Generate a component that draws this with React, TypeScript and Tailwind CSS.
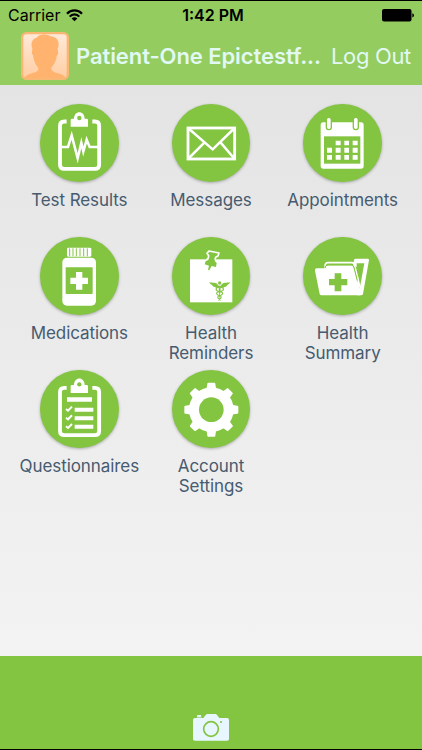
import type { ReactNode } from 'react';

const GREEN = '#83c441';

interface MenuItem {
  lines: string[];
  viewBox: string;
  icon: ReactNode;
}

/** Clipboard outline shared by the results and questionnaire icons */
function Clipboard() {
  return (
    <>
      <path
        d="M110 77.5H103Q90 77.5 90 90V207Q90 219.5 103 219.5H195Q207.5 219.5 207.5 207V90Q207.5 77.5 195 77.5H187"
        fill="none"
        stroke="#fff"
        strokeWidth="11.5"
      />
      <path
        d="M122 93V73Q122 69 126 69H132C132 43 164 43 164 69H170Q174 69 174 73V93Z"
        fill="#fff"
      />
      <circle cx="148" cy="67" r="6.5" fill={GREEN} />
    </>
  );
}

const items: MenuItem[] = [
  {
    lines: ['Test Results'],
    viewBox: '30 25 236 236',
    icon: (
      <>
        <Clipboard />
        <path
          d="M93 154H114L125 119L143 188L154 141L160 168L170 132L179 154H205"
          fill="none"
          stroke="#fff"
          strokeWidth="7.5"
          strokeMiterlimit="8"
        />
      </>
    ),
  },
  {
    lines: ['Messages'],
    viewBox: '35 25 236 236',
    icon: (
      <g fill="none" stroke="#fff" strokeWidth="8.5">
        <rect x="83" y="97" width="140" height="93" />
        <path d="M83 97L157 161L223 97M83 190L132 141M223 190L181 141" strokeWidth="7.5" />
      </g>
    ),
  },
  {
    lines: ['Appointments'],
    viewBox: '70 25 236 236',
    icon: (
      <>
        <rect x="123" y="80" width="129" height="139" rx="8" fill="#fff" />
        <rect x="133" y="122" width="109" height="82" fill={GREEN} />
        <g fill="#fff" stroke={GREEN} strokeWidth="4">
          <rect x="140" y="65" width="15" height="37" rx="7" />
          <rect x="221" y="65" width="15" height="37" rx="7" />
        </g>
        <path
          d="M168 135h15v14h-15zM194 135h14v14h-14zM219 135h15v14h-15zM142 156h15v15h-15zM168 156h15v15h-15zM194 156h14v15h-14zM219 156h15v15h-15zM142 178h15v14h-15zM168 178h15v14h-15zM194 178h14v14h-14zM219 178h15v14h-15z"
          fill="#fff"
        />
      </>
    ),
  },
  {
    lines: ['Medications'],
    viewBox: '60 19 236 236',
    icon: (
      <>
        <rect x="141" y="51" width="73" height="27" rx="4" fill="#fff" />
        <path
          d="M149 53V77M159 53V77M169 53V77M180 53V77M191 53V77M202 53V77"
          stroke={GREEN}
          strokeWidth="3"
        />
        <rect x="127" y="81" width="101" height="144" rx="14" fill="#fff" />
        <rect x="137" y="110" width="81" height="80" rx="2" fill={GREEN} />
        <path d="M168 124h19v17h17v19h-17v17h-19v-17h-17v-19h17z" fill="#fff" />
      </>
    ),
  },
  {
    lines: ['Health', 'Reminders'],
    viewBox: '35 19 236 236',
    icon: (
      <>
        <rect x="89" y="86" width="127" height="129" fill="#fff" />
        <path
          d="M146 63L176 68L172 75L167 80L163 91L169 97L167 109L154 106L147 119L143 118L146 105L133 101L136 92L145 87L147 76L143 70Z"
          fill={GREEN}
        />
        <path
          d="M139 87L144 82L145 75L140 68L146 61L176 67L173 76L166 80L164 87"
          fill="none"
          stroke="#fff"
          strokeWidth="5"
          strokeLinejoin="round"
        />
        <g fill={GREEN}>
          <circle cx="178" cy="157" r="5" />
          <path d="M175 165C168 153 157 158 146 154Q150 161 155 163Q157 169 164 169Q168 173 175 171L178 209L181 171Q188 173 192 169Q199 169 201 163Q206 161 210 154C199 158 188 153 181 165Z" />
        </g>
        <path
          d="M170 171C158 185 190 180 187 189C184 198 170 193 173 202L181 209M187 171C198 185 166 180 169 189C172 198 185 193 182 202L174 209"
          fill="none"
          stroke={GREEN}
          strokeWidth="3.5"
        />
      </>
    ),
  },
  {
    lines: ['Health', 'Summary'],
    viewBox: '41 19 236 236',
    icon: (
      <>
        <path
          d="M191 105L194 88Q195 84 199 84H236Q240 84 239 89L221 190Q220 194 215 194H203L207 110Z"
          fill="#fff"
        />
        <path d="M202 105L211 174L225 98H202Z" fill={GREEN} />
        <path
          d="M107 108Q107 96 116 96H187Q194 96 196 104L212 170"
          fill="none"
          stroke="#fff"
          strokeWidth="5"
        />
        <path
          d="M82 113H104Q107 104 116 104H183Q192 104 194 113L213 184V194H97Q92 194 91 190L77 120Q76 113 82 113Z"
          fill="#fff"
        />
        <path d="M107 113Q107 103 116 103H186Q193 103 194 111L204 150" fill="none" stroke={GREEN} strokeWidth="3" />
        <path d="M136 128h20v17h18v19h-18v18h-20v-18h-17v-19h17z" fill={GREEN} />
      </>
    ),
  },
  {
    lines: ['Questionnaires'],
    viewBox: '75 13 236 236',
    icon: (
      <>
        <g transform="translate(45 -11)">
          <Clipboard />
        </g>
        <path d="M156 95h75v13h-75zM179 126h56v12h-56zM179 152h56v12h-56zM179 177h56v12h-56z" fill="#fff" />
        <path
          d="M153 130L159 135L171 123M153 156L159 161L171 149M153 182L159 187L171 175"
          fill="none"
          stroke="#fff"
          strokeWidth="6"
        />
      </>
    ),
  },
  {
    lines: ['Account', 'Settings'],
    viewBox: '35 13 236 236',
    icon: (
      <>
        {[0, 45, 90, 135].map((angle) => (
          <path
            key={angle}
            d="M144 51H162Q165 51 165 54L169 80V184L165 210Q165 213 162 213H144Q141 213 141 210L137 184V80L141 54Q141 51 144 51Z"
            fill="#fff"
            transform={`rotate(${angle} 153 132)`}
          />
        ))}
        <circle cx="153" cy="132" r="67" fill="#fff" />
        <circle cx="153" cy="132" r="37" fill={GREEN} />
      </>
    ),
  },
];

function StatusBar() {
  return (
    <div className="grid h-[29px] grid-cols-3 items-center border-t border-black px-[8px] text-[16px] leading-none text-black">
      <div className="flex items-center gap-[6px]">
        <span>Carrier</span>
        <svg width="17" height="13" viewBox="0 0 17 13" fill="none" stroke="#000" strokeWidth="2.2">
          <path d="M1 4.7C5 0.3 12 0.3 16 4.7M3.7 7.6C6.3 4.6 10.7 4.6 13.3 7.6" />
          <path d="M8.5 12.3L5.6 9.4C7.2 7.8 9.8 7.8 11.4 9.4Z" fill="#000" stroke="none" />
        </svg>
      </div>
      <span className="pl-[4px] text-center font-semibold whitespace-nowrap">1:42 PM</span>
      <svg className="justify-self-end" width="32" height="13" viewBox="0 0 32 13">
        <rect width="29.5" height="12.5" rx="2" />
        <path d="M30.3 4.2Q32 4.5 32 6.3T30.3 8.4Z" />
      </svg>
    </div>
  );
}

function Avatar() {
  return (
    <svg className="shrink-0" width="48" height="48" viewBox="0 0 144 144">
      <defs>
        <linearGradient id="avatar" x2="0" y2="1">
          <stop stopColor="#ffead9" />
          <stop offset="1" stopColor="#ffcda2" />
        </linearGradient>
      </defs>
      <rect x="3" y="3" width="138" height="138" rx="13" fill="url(#avatar)" />
      <path
        d="M10 139Q15 128 29 125C47 119 53 119 52 107C42 99 38 85 36 69C30 66 34 57 34 50C27 31 37 18 47 17C54 5 78 6 89 13C110 14 118 33 110 50C111 59 114 66 108 70C106 85 100 98 91 107C91 118 98 120 115 125Q129 128 134 139Z"
        fill="#ffb36f"
      />
      <rect x="3.5" y="3.5" width="137" height="137" rx="13" fill="none" stroke="#f8b873" strokeWidth="7" />
    </svg>
  );
}

function MenuTile({ item }: { item: MenuItem }) {
  return (
    <button className="flex flex-col items-center">
      <svg className="size-[78.67px] rounded-full bg-[#83c441] shadow-[0_1px_3px_rgba(0,0,0,0.28)]" viewBox={item.viewBox}>
        {item.icon}
      </svg>
      <span className="mt-[8px] text-[17px] leading-[20px] tracking-[-0.08px] whitespace-nowrap text-[#465b70]">
        {item.lines.map((line) => (
          <span key={line} className="block">
            {line}
          </span>
        ))}
      </span>
    </button>
  );
}

export default function App() {
  return (
    <div className="flex h-[750px] w-[422px] flex-col overflow-hidden bg-[#e8e8e8] font-['Inter',sans-serif]">
      <header className="h-[85px] shrink-0 bg-[#94cc5f]">
        <StatusBar />
        <div className="flex h-[54px] items-center pl-[21px] text-[22px] leading-none text-[#e1f8f3]">
          <Avatar />
          <h1 className="ml-[7px] w-[246px] font-semibold whitespace-nowrap tracking-[-0.08px]">Patient-One Epictestf...</h1>
          <button className="ml-[9px] whitespace-nowrap tracking-[-0.35px]">Log Out</button>
        </div>
      </header>
      <main className="grid flex-1 auto-rows-[133px] grid-cols-3 items-start bg-linear-to-b from-[#e4e4e4] to-[#f3f3f3] px-[13.5px] pt-[18.6px]">
        {items.map((item) => (
          <MenuTile key={item.lines.join(' ')} item={item} />
        ))}
      </main>
      <footer className="flex h-[94px] shrink-0 items-end justify-center border-b border-black bg-[#83c441] pb-[8px]">
        <svg width="36" height="27" viewBox="0 0 108 81">
          <path
            d="M6 12H12V6Q12 3 15 3H22Q25 3 25 6V12H31L38 3Q40 0 44 0H67Q70 0 72 3L79 12H102Q108 12 108 18V75Q108 80 102 80H6Q0 80 0 75V18Q0 12 6 12Z"
            fill="#e8f7ff"
          />
          <path d="M10 10H27" stroke="#83c441" strokeWidth="2" />
          <circle cx="54" cy="45" r="22" fill="none" stroke="#83c441" strokeWidth="5" />
          <circle cx="84" cy="24" r="3" fill="#83c441" />
        </svg>
      </footer>
    </div>
  );
}
